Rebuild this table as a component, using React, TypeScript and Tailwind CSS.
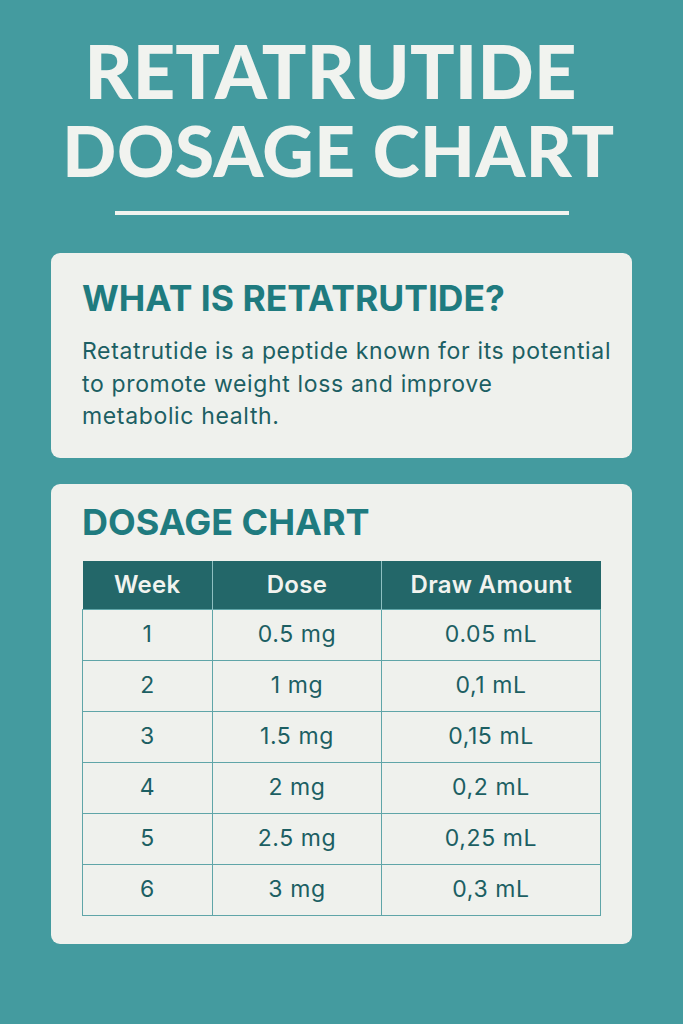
import React from "react";

const rows = [
  ["1", "0.5 mg", "0.05 mL"],
  ["2", "1 mg", "0,1 mL"],
  ["3", "1.5 mg", "0,15 mL"],
  ["4", "2 mg", "0,2 mL"],
  ["5", "2.5 mg", "0,25 mL"],
  ["6", "3 mg", "0,3 mL"],
];

export default function App() {
  return (
    <div className="w-[683px] h-[1024px] bg-[#449b9f] flex flex-col items-center overflow-hidden">
      <div
        className="pt-[31px] text-center text-[#f1f3ef] font-black"
        style={{ fontFamily: "Lato, 'Noto Sans', sans-serif" }}
      >
        <div className="pr-[22px] text-[74px] leading-[79px] tracking-[0.2px]">RETATRUTIDE</div>
        <div className="text-[71px] leading-[79px] tracking-[0.5px] pr-[6px]">DOSAGE CHART</div>
      </div>
      <div className="mt-[22px] w-[454px] h-[4px] bg-[#f1f3ef]" />
      <div
        className="mt-[38px] w-[581px] h-[205px] bg-[#eff1ed] rounded-[9px] pl-[31px] pt-[24px]"
        style={{ fontFamily: "Inter, 'Noto Sans', sans-serif" }}
      >
        <div className="text-[#1f7b7f] text-[35.5px] leading-[44px] font-bold">WHAT IS RETATRUTIDE?</div>
        <div className="mt-[14px] w-[540px] text-[#1c5f63] text-[23px] leading-[32.5px] tracking-[0.65px]">
          Retatrutide is a peptide known for its potential
          <br />
          to promote weight loss and improve
          <br />
          metabolic health.
        </div>
      </div>
      <div
        className="mt-[26px] w-[581px] h-[460px] bg-[#eff1ed] rounded-[9px] pl-[31px] pt-[16px]"
        style={{ fontFamily: "Inter, 'Noto Sans', sans-serif" }}
      >
        <div className="text-[#1f7b7f] text-[36px] leading-[44px] font-bold">DOSAGE CHART</div>
        <table className="mt-[17px] w-[518px] border-collapse table-fixed">
          <colgroup>
            <col className="w-[130px]" />
            <col className="w-[169px]" />
            <col className="w-[219px]" />
          </colgroup>
          <thead>
            <tr className="h-[48px] bg-[#236769] text-[#f1f3ef] text-[24px] tracking-[0.3px]">
              <th className="border-r border-[#8fbfc1] font-semibold">Week</th>
              <th className="border-r border-[#8fbfc1] font-semibold">Dose</th>
              <th className="font-semibold">Draw Amount</th>
            </tr>
          </thead>
          <tbody className="text-[#1c5f63] text-[23px] tracking-[0.6px]">
            {rows.map((r) => (
              <tr key={r[0]} className="h-[51px]">
                {r.map((c, i) => (
                  <td key={i} className="border border-[#5fa5a8] text-center">
                    {c}
                  </td>
                ))}
              </tr>
            ))}
          </tbody>
        </table>
      </div>
    </div>
  );
}
